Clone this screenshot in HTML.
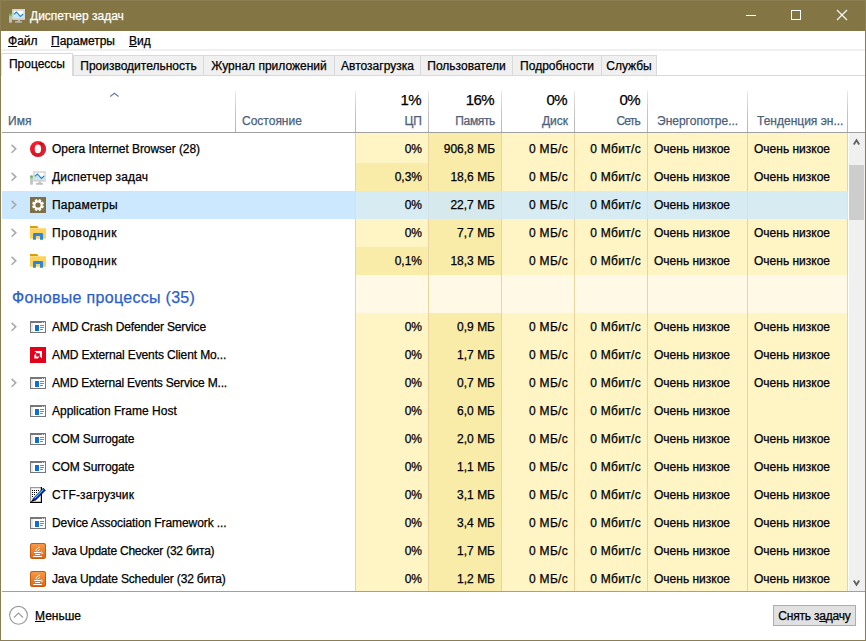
<!DOCTYPE html>
<html><head><meta charset="utf-8"><style>
html,body{margin:0;padding:0;width:866px;height:641px;overflow:hidden;background:#fff}
#w div{position:absolute}
#w{position:relative;width:866px;height:641px;font-family:"Liberation Sans", sans-serif;font-size:12px;color:#000}
.t{white-space:nowrap;-webkit-text-stroke:0.25px currentColor}
u{text-decoration:underline;text-underline-offset:1px}
svg{display:block}
</style></head><body><div id="w">
<div style="left:0px;top:0px;width:866px;height:31px;background:#837544"></div>
<div style="left:9px;top:7px;width:16px;height:16px"><svg width="16" height="16" viewBox="0 0 16 16"><rect x="3.3" y="2.1" width="12.6" height="10.6" fill="#cfcfcf"/><rect x="3.8" y="2.6" width="11.6" height="9.6" fill="none" stroke="#e4e4e4" stroke-width=".6"/><rect x="4.8" y="3.7" width="9.6" height="7.3" fill="#fff"/><path d="M4.8 7.3 L7.4 5 L11.4 9.4 L14.4 6.8 V11 H4.8z" fill="#c4e8f8"/><path d="M4.8 7.3 L7.4 5 L11.4 9.4 L14.2 7" fill="none" stroke="#1d82c6" stroke-width="1.1"/><rect x="8.7" y="12.7" width="2.3" height="1.4" fill="#bdbdbd"/><rect x="6.1" y="14.1" width="6.8" height="1.6" fill="#b8b8b8"/><rect x="0.1" y="6.7" width="2.8" height="9" fill="#c4c4c4"/><rect x="0.4" y="6.7" width="2.2" height="0.8" fill="#555"/><rect x="0.4" y="7.5" width="2.2" height="1.7" fill="#2ee81a"/></svg></div>
<div class="t" style="left:30px;top:1px;height:31px;line-height:30px;text-align:left;color:#fff">Диспетчер задач</div>
<svg style="position:absolute;left:740px;top:0" width="126" height="31"><path d="M6 15.5 H16" stroke="#fff" stroke-width="1"/><rect x="51.5" y="10.5" width="9" height="9" fill="none" stroke="#fff" stroke-width="1"/><path d="M97 10 L107 20 M107 10 L97 20" stroke="#fff" stroke-width="1.1"/></svg>
<div style="left:1px;top:31px;width:864px;height:18px;background:#fff"></div>
<div class="t" style="left:8px;top:32px;height:18px;line-height:19px;text-align:left;"><u>Ф</u>айл</div>
<div class="t" style="left:51px;top:32px;height:18px;line-height:19px;text-align:left;"><u>П</u>араметры</div>
<div class="t" style="left:129px;top:32px;height:18px;line-height:19px;text-align:left;"><u>В</u>ид</div>
<div style="left:1px;top:49px;width:864px;height:2px;background:#f0f0f0"></div>
<div style="left:1px;top:51px;width:864px;height:540px;background:#fff"></div>
<div style="left:1px;top:53px;width:72px;height:23px;background:#fff;border:1px solid #d9d9d9;border-bottom:none;border-left-color:#e6e6ea;box-sizing:border-box"></div>
<div class="t" style="left:1px;top:53px;width:72px;height:22px;line-height:23px;text-align:center;">Процессы</div>
<div style="left:73px;top:55px;width:131px;height:21px;background:#f0f0f0;border:1px solid #d9d9d9;box-sizing:border-box"></div>
<div class="t" style="left:73px;top:56px;width:131px;height:20px;line-height:21px;text-align:center;">Производительность</div>
<div style="left:203px;top:55px;width:132px;height:21px;background:#f0f0f0;border:1px solid #d9d9d9;box-sizing:border-box"></div>
<div class="t" style="left:203px;top:56px;width:132px;height:20px;line-height:21px;text-align:center;">Журнал приложений</div>
<div style="left:334px;top:55px;width:87px;height:21px;background:#f0f0f0;border:1px solid #d9d9d9;box-sizing:border-box"></div>
<div class="t" style="left:334px;top:56px;width:87px;height:20px;line-height:21px;text-align:center;">Автозагрузка</div>
<div style="left:420px;top:55px;width:93px;height:21px;background:#f0f0f0;border:1px solid #d9d9d9;box-sizing:border-box"></div>
<div class="t" style="left:420px;top:56px;width:93px;height:20px;line-height:21px;text-align:center;">Пользователи</div>
<div style="left:512px;top:55px;width:90px;height:21px;background:#f0f0f0;border:1px solid #d9d9d9;box-sizing:border-box"></div>
<div class="t" style="left:512px;top:56px;width:90px;height:20px;line-height:21px;text-align:center;">Подробности</div>
<div style="left:601px;top:55px;width:56px;height:21px;background:#f0f0f0;border:1px solid #d9d9d9;box-sizing:border-box"></div>
<div class="t" style="left:601px;top:56px;width:56px;height:20px;line-height:21px;text-align:center;">Службы</div>
<div style="left:73px;top:75px;width:792px;height:1px;background:#d9d9d9"></div>
<div class="t" style="left:8px;top:112px;height:18px;line-height:18px;text-align:left;color:#4c607a">Имя</div>
<svg style="position:absolute;left:109px;top:91px" width="11" height="7"><path d="M1.2 5.5 L5.4 2.3 L9.6 5.5" fill="none" stroke="#6f7898" stroke-width="1.1"/></svg>
<div class="t" style="left:242px;top:112px;height:18px;line-height:18px;text-align:left;color:#4c607a">Состояние</div>
<div class="t" style="left:348px;top:91px;width:73px;height:18px;line-height:18px;text-align:right;font-size:15px;letter-spacing:-0.6px">1%</div>
<div class="t" style="left:348px;top:112px;width:74px;height:18px;line-height:18px;text-align:right;color:#4c607a;letter-spacing:0px">ЦП</div>
<div class="t" style="left:421px;top:91px;width:73px;height:18px;line-height:18px;text-align:right;font-size:15px;letter-spacing:-0.6px">16%</div>
<div class="t" style="left:421px;top:112px;width:74px;height:18px;line-height:18px;text-align:right;color:#4c607a;letter-spacing:-0.35px">Память</div>
<div class="t" style="left:494px;top:91px;width:73px;height:18px;line-height:18px;text-align:right;font-size:15px;letter-spacing:-0.6px">0%</div>
<div class="t" style="left:494px;top:112px;width:74px;height:18px;line-height:18px;text-align:right;color:#4c607a;letter-spacing:0px">Диск</div>
<div class="t" style="left:567px;top:91px;width:73px;height:18px;line-height:18px;text-align:right;font-size:15px;letter-spacing:-0.6px">0%</div>
<div class="t" style="left:566px;top:112px;width:74px;height:18px;line-height:18px;text-align:right;color:#4c607a;letter-spacing:-0.8px">Сеть</div>
<div class="t" style="left:657px;top:112px;height:18px;line-height:18px;text-align:left;color:#4c607a">Энергопотре...</div>
<div class="t" style="left:757px;top:112px;height:18px;line-height:18px;text-align:left;color:#4c607a">Тенденция эн...</div>
<div style="left:235px;top:91px;width:1px;height:41px;background:linear-gradient(#e8e8e8,#cacaca 45%,#b4b4b4)"></div>
<div style="left:355px;top:91px;width:1px;height:41px;background:linear-gradient(#e8e8e8,#cacaca 45%,#b4b4b4)"></div>
<div style="left:428px;top:91px;width:1px;height:41px;background:linear-gradient(#e8e8e8,#cacaca 45%,#b4b4b4)"></div>
<div style="left:501px;top:91px;width:1px;height:41px;background:linear-gradient(#e8e8e8,#cacaca 45%,#b4b4b4)"></div>
<div style="left:574px;top:91px;width:1px;height:41px;background:linear-gradient(#e8e8e8,#cacaca 45%,#b4b4b4)"></div>
<div style="left:647px;top:91px;width:1px;height:41px;background:linear-gradient(#e8e8e8,#cacaca 45%,#b4b4b4)"></div>
<div style="left:747px;top:91px;width:1px;height:41px;background:linear-gradient(#e8e8e8,#cacaca 45%,#b4b4b4)"></div>
<div style="left:847px;top:91px;width:1px;height:41px;background:linear-gradient(#e8e8e8,#cacaca 45%,#b4b4b4)"></div>
<div style="left:2px;top:132px;width:863px;height:1px;background:#a0a0a0"></div>
<div style="left:356px;top:133px;width:72px;height:458px;background:#fff4c4"></div>
<div style="left:429px;top:133px;width:72px;height:458px;background:#fff4c4"></div>
<div style="left:502px;top:133px;width:72px;height:458px;background:#fff4c4"></div>
<div style="left:575px;top:133px;width:72px;height:458px;background:#fff4c4"></div>
<div style="left:648px;top:133px;width:99px;height:458px;background:#fff4c4"></div>
<div style="left:748px;top:133px;width:99px;height:458px;background:#fff4c4"></div>
<div style="left:429px;top:133px;width:72px;height:2px;background:#f9eca8"></div>
<div style="left:356px;top:135px;width:72px;height:28px;background:#fff4c4"></div>
<div style="left:429px;top:135px;width:72px;height:28px;background:#f9eca8"></div>
<div style="left:502px;top:135px;width:72px;height:28px;background:#fff4c4"></div>
<div style="left:575px;top:135px;width:72px;height:28px;background:#fff4c4"></div>
<div style="left:648px;top:135px;width:99px;height:28px;background:#fff4c4"></div>
<div style="left:748px;top:135px;width:99px;height:28px;background:#fff4c4"></div>
<svg style="position:absolute;left:10px;top:144px" width="7" height="10" viewBox="0 0 7 10"><path d="M1.6 0.9 L5.8 4.85 L1.6 8.8" fill="none" stroke="#a8a8a8" stroke-width="1.5"/></svg>
<div style="left:30px;top:141px;width:16px;height:16px"><svg width="16" height="16" viewBox="0 0 16 16"><defs><linearGradient id="og" x1="0" y1="0" x2="0" y2="1"><stop offset="0" stop-color="#ff1f30"/><stop offset="1" stop-color="#d8101f"/></linearGradient><linearGradient id="og2" x1="0" y1="0" x2="1" y2="1"><stop offset="0" stop-color="#a8000f"/><stop offset="1" stop-color="#e83a44"/></linearGradient></defs><circle cx="8" cy="8" r="8" fill="url(#og)"/><path d="M7.9 3.2 C11.3 3.2 13 5.6 13 8 C13 10.6 11.3 13 7.9 13 C10.6 16.8 16 13.2 16 8 C16 2.8 10.6 -0.8 7.9 3.2z" fill="url(#og2)" opacity=".8"/><ellipse cx="7.9" cy="7.9" rx="3.2" ry="4.4" fill="#fff"/></svg></div>
<div class="t" style="left:52px;top:135px;height:28px;line-height:28px;text-align:left;letter-spacing:-0.05px">Opera Internet Browser (28)</div>
<div class="t" style="left:358px;top:135px;width:64px;height:28px;line-height:28px;text-align:right;">0%</div>
<div class="t" style="left:431px;top:135px;width:64px;height:28px;line-height:28px;text-align:right;">906,8 МБ</div>
<div class="t" style="left:504px;top:135px;width:64px;height:28px;line-height:28px;text-align:right;letter-spacing:0.3px;">0 МБ/с</div>
<div class="t" style="left:577px;top:135px;width:64px;height:28px;line-height:28px;text-align:right;letter-spacing:0.3px;">0 Мбит/с</div>
<div class="t" style="left:654px;top:135px;height:28px;line-height:28px;text-align:left;">Очень низкое</div>
<div class="t" style="left:754px;top:135px;height:28px;line-height:28px;text-align:left;">Очень низкое</div>
<div style="left:356px;top:163px;width:72px;height:28px;background:#f9eca8"></div>
<div style="left:429px;top:163px;width:72px;height:28px;background:#f9eca8"></div>
<div style="left:502px;top:163px;width:72px;height:28px;background:#fff4c4"></div>
<div style="left:575px;top:163px;width:72px;height:28px;background:#fff4c4"></div>
<div style="left:648px;top:163px;width:99px;height:28px;background:#fff4c4"></div>
<div style="left:748px;top:163px;width:99px;height:28px;background:#fff4c4"></div>
<svg style="position:absolute;left:10px;top:172px" width="7" height="10" viewBox="0 0 7 10"><path d="M1.6 0.9 L5.8 4.85 L1.6 8.8" fill="none" stroke="#a8a8a8" stroke-width="1.5"/></svg>
<div style="left:30px;top:169px;width:16px;height:16px"><svg width="16" height="16" viewBox="0 0 16 16"><rect x="3.3" y="2.1" width="12.6" height="10.6" fill="#cfcfcf"/><rect x="3.8" y="2.6" width="11.6" height="9.6" fill="none" stroke="#e4e4e4" stroke-width=".6"/><rect x="4.8" y="3.7" width="9.6" height="7.3" fill="#fff"/><path d="M4.8 7.3 L7.4 5 L11.4 9.4 L14.4 6.8 V11 H4.8z" fill="#c4e8f8"/><path d="M4.8 7.3 L7.4 5 L11.4 9.4 L14.2 7" fill="none" stroke="#1d82c6" stroke-width="1.1"/><rect x="8.7" y="12.7" width="2.3" height="1.4" fill="#bdbdbd"/><rect x="6.1" y="14.1" width="6.8" height="1.6" fill="#b8b8b8"/><rect x="0.1" y="6.7" width="2.8" height="9" fill="#c4c4c4"/><rect x="0.4" y="6.7" width="2.2" height="0.8" fill="#555"/><rect x="0.4" y="7.5" width="2.2" height="1.7" fill="#2ee81a"/></svg></div>
<div class="t" style="left:52px;top:163px;height:28px;line-height:28px;text-align:left;letter-spacing:0.15px">Диспетчер задач</div>
<div class="t" style="left:358px;top:163px;width:64px;height:28px;line-height:28px;text-align:right;">0,3%</div>
<div class="t" style="left:431px;top:163px;width:64px;height:28px;line-height:28px;text-align:right;">18,6 МБ</div>
<div class="t" style="left:504px;top:163px;width:64px;height:28px;line-height:28px;text-align:right;letter-spacing:0.3px;">0 МБ/с</div>
<div class="t" style="left:577px;top:163px;width:64px;height:28px;line-height:28px;text-align:right;letter-spacing:0.3px;">0 Мбит/с</div>
<div class="t" style="left:654px;top:163px;height:28px;line-height:28px;text-align:left;">Очень низкое</div>
<div class="t" style="left:754px;top:163px;height:28px;line-height:28px;text-align:left;">Очень низкое</div>
<div style="left:2px;top:191px;width:353px;height:28px;background:#cce8ff"></div>
<div style="left:356px;top:191px;width:72px;height:28px;background:#fff4c4"></div>
<div style="left:429px;top:191px;width:72px;height:28px;background:#f9eca8"></div>
<div style="left:502px;top:191px;width:72px;height:28px;background:#fff4c4"></div>
<div style="left:575px;top:191px;width:72px;height:28px;background:#fff4c4"></div>
<div style="left:648px;top:191px;width:99px;height:28px;background:#fff4c4"></div>
<div style="left:748px;top:191px;width:99px;height:28px;background:#fff4c4"></div>
<div style="left:356px;top:219px;width:72px;height:28px;background:#fff4c4"></div>
<div style="left:429px;top:219px;width:72px;height:28px;background:#f9eca8"></div>
<div style="left:502px;top:219px;width:72px;height:28px;background:#fff4c4"></div>
<div style="left:575px;top:219px;width:72px;height:28px;background:#fff4c4"></div>
<div style="left:648px;top:219px;width:99px;height:28px;background:#fff4c4"></div>
<div style="left:748px;top:219px;width:99px;height:28px;background:#fff4c4"></div>
<svg style="position:absolute;left:10px;top:228px" width="7" height="10" viewBox="0 0 7 10"><path d="M1.6 0.9 L5.8 4.85 L1.6 8.8" fill="none" stroke="#a8a8a8" stroke-width="1.5"/></svg>
<div style="left:30px;top:225px;width:16px;height:16px"><svg width="16" height="16" viewBox="0 0 16 16"><path d="M0 1 H7 L8.3 2.4 L7 3.9 H0z" fill="#dc9c0c"/><rect x="0" y="3" width="16" height="10.7" fill="#fdd35c"/><rect x="0" y="3" width="16" height="0.8" fill="#ffe28e"/><path d="M3 14.8 V9.2 Q3 8 4.2 8 H11.9 Q13.1 8 13.1 9.2 V14.8 H10 V11 H5.9 V14.8z" fill="#2a86de"/></svg></div>
<div class="t" style="left:52px;top:219px;height:28px;line-height:28px;text-align:left;letter-spacing:0.55px">Проводник</div>
<div class="t" style="left:358px;top:219px;width:64px;height:28px;line-height:28px;text-align:right;">0%</div>
<div class="t" style="left:431px;top:219px;width:64px;height:28px;line-height:28px;text-align:right;">7,7 МБ</div>
<div class="t" style="left:504px;top:219px;width:64px;height:28px;line-height:28px;text-align:right;letter-spacing:0.3px;">0 МБ/с</div>
<div class="t" style="left:577px;top:219px;width:64px;height:28px;line-height:28px;text-align:right;letter-spacing:0.3px;">0 Мбит/с</div>
<div class="t" style="left:654px;top:219px;height:28px;line-height:28px;text-align:left;">Очень низкое</div>
<div class="t" style="left:754px;top:219px;height:28px;line-height:28px;text-align:left;">Очень низкое</div>
<div style="left:356px;top:247px;width:72px;height:28px;background:#f9eca8"></div>
<div style="left:429px;top:247px;width:72px;height:28px;background:#f9eca8"></div>
<div style="left:502px;top:247px;width:72px;height:28px;background:#fff4c4"></div>
<div style="left:575px;top:247px;width:72px;height:28px;background:#fff4c4"></div>
<div style="left:648px;top:247px;width:99px;height:28px;background:#fff4c4"></div>
<div style="left:748px;top:247px;width:99px;height:28px;background:#fff4c4"></div>
<svg style="position:absolute;left:10px;top:256px" width="7" height="10" viewBox="0 0 7 10"><path d="M1.6 0.9 L5.8 4.85 L1.6 8.8" fill="none" stroke="#a8a8a8" stroke-width="1.5"/></svg>
<div style="left:30px;top:253px;width:16px;height:16px"><svg width="16" height="16" viewBox="0 0 16 16"><path d="M0 1 H7 L8.3 2.4 L7 3.9 H0z" fill="#dc9c0c"/><rect x="0" y="3" width="16" height="10.7" fill="#fdd35c"/><rect x="0" y="3" width="16" height="0.8" fill="#ffe28e"/><path d="M3 14.8 V9.2 Q3 8 4.2 8 H11.9 Q13.1 8 13.1 9.2 V14.8 H10 V11 H5.9 V14.8z" fill="#2a86de"/></svg></div>
<div class="t" style="left:52px;top:247px;height:28px;line-height:28px;text-align:left;letter-spacing:0.55px">Проводник</div>
<div class="t" style="left:358px;top:247px;width:64px;height:28px;line-height:28px;text-align:right;">0,1%</div>
<div class="t" style="left:431px;top:247px;width:64px;height:28px;line-height:28px;text-align:right;">18,3 МБ</div>
<div class="t" style="left:504px;top:247px;width:64px;height:28px;line-height:28px;text-align:right;letter-spacing:0.3px;">0 МБ/с</div>
<div class="t" style="left:577px;top:247px;width:64px;height:28px;line-height:28px;text-align:right;letter-spacing:0.3px;">0 Мбит/с</div>
<div class="t" style="left:654px;top:247px;height:28px;line-height:28px;text-align:left;">Очень низкое</div>
<div class="t" style="left:754px;top:247px;height:28px;line-height:28px;text-align:left;">Очень низкое</div>
<div style="left:356px;top:275px;width:72px;height:38px;background:#fff9e5"></div>
<div style="left:429px;top:275px;width:72px;height:38px;background:#fff9e5"></div>
<div style="left:502px;top:275px;width:72px;height:38px;background:#fff9e5"></div>
<div style="left:575px;top:275px;width:72px;height:38px;background:#fff9e5"></div>
<div style="left:648px;top:275px;width:99px;height:38px;background:#fff9e5"></div>
<div style="left:748px;top:275px;width:99px;height:38px;background:#fff9e5"></div>
<div class="t" style="left:12px;top:275px;height:38px;line-height:45px;text-align:left;font-size:16px;letter-spacing:0.3px;color:#2a60cc">Фоновые процессы (35)</div>
<div style="left:356px;top:313px;width:72px;height:28px;background:#fff4c4"></div>
<div style="left:429px;top:313px;width:72px;height:28px;background:#f9eca8"></div>
<div style="left:502px;top:313px;width:72px;height:28px;background:#fff4c4"></div>
<div style="left:575px;top:313px;width:72px;height:28px;background:#fff4c4"></div>
<div style="left:648px;top:313px;width:99px;height:28px;background:#fff4c4"></div>
<div style="left:748px;top:313px;width:99px;height:28px;background:#fff4c4"></div>
<svg style="position:absolute;left:10px;top:322px" width="7" height="10" viewBox="0 0 7 10"><path d="M1.6 0.9 L5.8 4.85 L1.6 8.8" fill="none" stroke="#a8a8a8" stroke-width="1.5"/></svg>
<div style="left:30px;top:319px;width:16px;height:16px"><svg width="16" height="16" viewBox="0 0 16 16" shape-rendering="crispEdges"><rect x="0" y="2" width="16" height="12" fill="#777"/><rect x="1" y="4" width="14" height="9" fill="#fff"/><rect x="1" y="4" width="2" height="9" fill="#e8e8e8"/><rect x="12" y="3" width="1" height="1" fill="#ddd"/><rect x="14" y="3" width="1" height="1" fill="#ddd"/><rect x="5" y="6" width="4" height="6" fill="#0b6fd6"/><rect x="10" y="6" width="4" height="1" fill="#888"/><rect x="10" y="8" width="4" height="1" fill="#888"/><rect x="10" y="10" width="3" height="1" fill="#888"/></svg></div>
<div class="t" style="left:52px;top:313px;height:28px;line-height:28px;text-align:left;letter-spacing:-0.16px">AMD Crash Defender Service</div>
<div class="t" style="left:358px;top:313px;width:64px;height:28px;line-height:28px;text-align:right;">0%</div>
<div class="t" style="left:431px;top:313px;width:64px;height:28px;line-height:28px;text-align:right;">0,9 МБ</div>
<div class="t" style="left:504px;top:313px;width:64px;height:28px;line-height:28px;text-align:right;letter-spacing:0.3px;">0 МБ/с</div>
<div class="t" style="left:577px;top:313px;width:64px;height:28px;line-height:28px;text-align:right;letter-spacing:0.3px;">0 Мбит/с</div>
<div class="t" style="left:654px;top:313px;height:28px;line-height:28px;text-align:left;">Очень низкое</div>
<div class="t" style="left:754px;top:313px;height:28px;line-height:28px;text-align:left;">Очень низкое</div>
<div style="left:356px;top:341px;width:72px;height:28px;background:#fff4c4"></div>
<div style="left:429px;top:341px;width:72px;height:28px;background:#f9eca8"></div>
<div style="left:502px;top:341px;width:72px;height:28px;background:#fff4c4"></div>
<div style="left:575px;top:341px;width:72px;height:28px;background:#fff4c4"></div>
<div style="left:648px;top:341px;width:99px;height:28px;background:#fff4c4"></div>
<div style="left:748px;top:341px;width:99px;height:28px;background:#fff4c4"></div>
<div style="left:30px;top:347px;width:16px;height:16px"><svg width="16" height="16" viewBox="0 0 16 16"><rect width="16" height="16" fill="#e2001a"/><path d="M4.5 4 H12 V11.5 L9.8 9.3 V6.2 H6.7z" fill="#fff"/><path d="M4.3 8 L6.2 6.3 V9.6 H9.5 L7.8 11.6 H4.3z" fill="#fff"/></svg></div>
<div class="t" style="left:52px;top:341px;height:28px;line-height:28px;text-align:left;letter-spacing:-0.12px">AMD External Events Client Mo...</div>
<div class="t" style="left:358px;top:341px;width:64px;height:28px;line-height:28px;text-align:right;">0%</div>
<div class="t" style="left:431px;top:341px;width:64px;height:28px;line-height:28px;text-align:right;">1,7 МБ</div>
<div class="t" style="left:504px;top:341px;width:64px;height:28px;line-height:28px;text-align:right;letter-spacing:0.3px;">0 МБ/с</div>
<div class="t" style="left:577px;top:341px;width:64px;height:28px;line-height:28px;text-align:right;letter-spacing:0.3px;">0 Мбит/с</div>
<div class="t" style="left:654px;top:341px;height:28px;line-height:28px;text-align:left;">Очень низкое</div>
<div class="t" style="left:754px;top:341px;height:28px;line-height:28px;text-align:left;">Очень низкое</div>
<div style="left:356px;top:369px;width:72px;height:28px;background:#fff4c4"></div>
<div style="left:429px;top:369px;width:72px;height:28px;background:#f9eca8"></div>
<div style="left:502px;top:369px;width:72px;height:28px;background:#fff4c4"></div>
<div style="left:575px;top:369px;width:72px;height:28px;background:#fff4c4"></div>
<div style="left:648px;top:369px;width:99px;height:28px;background:#fff4c4"></div>
<div style="left:748px;top:369px;width:99px;height:28px;background:#fff4c4"></div>
<svg style="position:absolute;left:10px;top:378px" width="7" height="10" viewBox="0 0 7 10"><path d="M1.6 0.9 L5.8 4.85 L1.6 8.8" fill="none" stroke="#a8a8a8" stroke-width="1.5"/></svg>
<div style="left:30px;top:375px;width:16px;height:16px"><svg width="16" height="16" viewBox="0 0 16 16" shape-rendering="crispEdges"><rect x="0" y="2" width="16" height="12" fill="#777"/><rect x="1" y="4" width="14" height="9" fill="#fff"/><rect x="1" y="4" width="2" height="9" fill="#e8e8e8"/><rect x="12" y="3" width="1" height="1" fill="#ddd"/><rect x="14" y="3" width="1" height="1" fill="#ddd"/><rect x="5" y="6" width="4" height="6" fill="#0b6fd6"/><rect x="10" y="6" width="4" height="1" fill="#888"/><rect x="10" y="8" width="4" height="1" fill="#888"/><rect x="10" y="10" width="3" height="1" fill="#888"/></svg></div>
<div class="t" style="left:52px;top:369px;height:28px;line-height:28px;text-align:left;letter-spacing:-0.18px">AMD External Events Service M...</div>
<div class="t" style="left:358px;top:369px;width:64px;height:28px;line-height:28px;text-align:right;">0%</div>
<div class="t" style="left:431px;top:369px;width:64px;height:28px;line-height:28px;text-align:right;">0,7 МБ</div>
<div class="t" style="left:504px;top:369px;width:64px;height:28px;line-height:28px;text-align:right;letter-spacing:0.3px;">0 МБ/с</div>
<div class="t" style="left:577px;top:369px;width:64px;height:28px;line-height:28px;text-align:right;letter-spacing:0.3px;">0 Мбит/с</div>
<div class="t" style="left:654px;top:369px;height:28px;line-height:28px;text-align:left;">Очень низкое</div>
<div class="t" style="left:754px;top:369px;height:28px;line-height:28px;text-align:left;">Очень низкое</div>
<div style="left:356px;top:397px;width:72px;height:28px;background:#fff4c4"></div>
<div style="left:429px;top:397px;width:72px;height:28px;background:#f9eca8"></div>
<div style="left:502px;top:397px;width:72px;height:28px;background:#fff4c4"></div>
<div style="left:575px;top:397px;width:72px;height:28px;background:#fff4c4"></div>
<div style="left:648px;top:397px;width:99px;height:28px;background:#fff4c4"></div>
<div style="left:748px;top:397px;width:99px;height:28px;background:#fff4c4"></div>
<div style="left:30px;top:403px;width:16px;height:16px"><svg width="16" height="16" viewBox="0 0 16 16" shape-rendering="crispEdges"><rect x="0" y="2" width="16" height="12" fill="#777"/><rect x="1" y="4" width="14" height="9" fill="#fff"/><rect x="1" y="4" width="2" height="9" fill="#e8e8e8"/><rect x="12" y="3" width="1" height="1" fill="#ddd"/><rect x="14" y="3" width="1" height="1" fill="#ddd"/><rect x="5" y="6" width="4" height="6" fill="#0b6fd6"/><rect x="10" y="6" width="4" height="1" fill="#888"/><rect x="10" y="8" width="4" height="1" fill="#888"/><rect x="10" y="10" width="3" height="1" fill="#888"/></svg></div>
<div class="t" style="left:52px;top:397px;height:28px;line-height:28px;text-align:left;letter-spacing:0px">Application Frame Host</div>
<div class="t" style="left:358px;top:397px;width:64px;height:28px;line-height:28px;text-align:right;">0%</div>
<div class="t" style="left:431px;top:397px;width:64px;height:28px;line-height:28px;text-align:right;">6,0 МБ</div>
<div class="t" style="left:504px;top:397px;width:64px;height:28px;line-height:28px;text-align:right;letter-spacing:0.3px;">0 МБ/с</div>
<div class="t" style="left:577px;top:397px;width:64px;height:28px;line-height:28px;text-align:right;letter-spacing:0.3px;">0 Мбит/с</div>
<div class="t" style="left:654px;top:397px;height:28px;line-height:28px;text-align:left;">Очень низкое</div>
<div style="left:356px;top:425px;width:72px;height:28px;background:#fff4c4"></div>
<div style="left:429px;top:425px;width:72px;height:28px;background:#f9eca8"></div>
<div style="left:502px;top:425px;width:72px;height:28px;background:#fff4c4"></div>
<div style="left:575px;top:425px;width:72px;height:28px;background:#fff4c4"></div>
<div style="left:648px;top:425px;width:99px;height:28px;background:#fff4c4"></div>
<div style="left:748px;top:425px;width:99px;height:28px;background:#fff4c4"></div>
<div style="left:30px;top:431px;width:16px;height:16px"><svg width="16" height="16" viewBox="0 0 16 16" shape-rendering="crispEdges"><rect x="0" y="2" width="16" height="12" fill="#777"/><rect x="1" y="4" width="14" height="9" fill="#fff"/><rect x="1" y="4" width="2" height="9" fill="#e8e8e8"/><rect x="12" y="3" width="1" height="1" fill="#ddd"/><rect x="14" y="3" width="1" height="1" fill="#ddd"/><rect x="5" y="6" width="4" height="6" fill="#0b6fd6"/><rect x="10" y="6" width="4" height="1" fill="#888"/><rect x="10" y="8" width="4" height="1" fill="#888"/><rect x="10" y="10" width="3" height="1" fill="#888"/></svg></div>
<div class="t" style="left:52px;top:425px;height:28px;line-height:28px;text-align:left;letter-spacing:-0.14px">COM Surrogate</div>
<div class="t" style="left:358px;top:425px;width:64px;height:28px;line-height:28px;text-align:right;">0%</div>
<div class="t" style="left:431px;top:425px;width:64px;height:28px;line-height:28px;text-align:right;">2,0 МБ</div>
<div class="t" style="left:504px;top:425px;width:64px;height:28px;line-height:28px;text-align:right;letter-spacing:0.3px;">0 МБ/с</div>
<div class="t" style="left:577px;top:425px;width:64px;height:28px;line-height:28px;text-align:right;letter-spacing:0.3px;">0 Мбит/с</div>
<div class="t" style="left:654px;top:425px;height:28px;line-height:28px;text-align:left;">Очень низкое</div>
<div class="t" style="left:754px;top:425px;height:28px;line-height:28px;text-align:left;">Очень низкое</div>
<div style="left:356px;top:453px;width:72px;height:28px;background:#fff4c4"></div>
<div style="left:429px;top:453px;width:72px;height:28px;background:#f9eca8"></div>
<div style="left:502px;top:453px;width:72px;height:28px;background:#fff4c4"></div>
<div style="left:575px;top:453px;width:72px;height:28px;background:#fff4c4"></div>
<div style="left:648px;top:453px;width:99px;height:28px;background:#fff4c4"></div>
<div style="left:748px;top:453px;width:99px;height:28px;background:#fff4c4"></div>
<div style="left:30px;top:459px;width:16px;height:16px"><svg width="16" height="16" viewBox="0 0 16 16" shape-rendering="crispEdges"><rect x="0" y="2" width="16" height="12" fill="#777"/><rect x="1" y="4" width="14" height="9" fill="#fff"/><rect x="1" y="4" width="2" height="9" fill="#e8e8e8"/><rect x="12" y="3" width="1" height="1" fill="#ddd"/><rect x="14" y="3" width="1" height="1" fill="#ddd"/><rect x="5" y="6" width="4" height="6" fill="#0b6fd6"/><rect x="10" y="6" width="4" height="1" fill="#888"/><rect x="10" y="8" width="4" height="1" fill="#888"/><rect x="10" y="10" width="3" height="1" fill="#888"/></svg></div>
<div class="t" style="left:52px;top:453px;height:28px;line-height:28px;text-align:left;letter-spacing:-0.14px">COM Surrogate</div>
<div class="t" style="left:358px;top:453px;width:64px;height:28px;line-height:28px;text-align:right;">0%</div>
<div class="t" style="left:431px;top:453px;width:64px;height:28px;line-height:28px;text-align:right;">1,1 МБ</div>
<div class="t" style="left:504px;top:453px;width:64px;height:28px;line-height:28px;text-align:right;letter-spacing:0.3px;">0 МБ/с</div>
<div class="t" style="left:577px;top:453px;width:64px;height:28px;line-height:28px;text-align:right;letter-spacing:0.3px;">0 Мбит/с</div>
<div class="t" style="left:654px;top:453px;height:28px;line-height:28px;text-align:left;">Очень низкое</div>
<div class="t" style="left:754px;top:453px;height:28px;line-height:28px;text-align:left;">Очень низкое</div>
<div style="left:356px;top:481px;width:72px;height:28px;background:#fff4c4"></div>
<div style="left:429px;top:481px;width:72px;height:28px;background:#f9eca8"></div>
<div style="left:502px;top:481px;width:72px;height:28px;background:#fff4c4"></div>
<div style="left:575px;top:481px;width:72px;height:28px;background:#fff4c4"></div>
<div style="left:648px;top:481px;width:99px;height:28px;background:#fff4c4"></div>
<div style="left:748px;top:481px;width:99px;height:28px;background:#fff4c4"></div>
<div style="left:30px;top:487px;width:16px;height:16px"><svg width="16" height="16" viewBox="0 0 16 16"><rect x="0" y="0" width="12" height="16" fill="#fff"/><path d="M0.6 15.5 V0.6 H11" fill="none" stroke="#9a9a9a" stroke-width="1.2"/><path d="M11.4 0 V15.4 H0" fill="none" stroke="#000" stroke-width="1.2"/><g fill="#000"><rect x="2" y="3" width="1" height="1"/><rect x="4" y="3" width="1" height="1"/><rect x="6" y="3" width="1" height="1"/><rect x="8" y="3" width="1" height="1"/><rect x="2" y="5" width="1" height="1"/><rect x="4" y="5" width="1" height="1"/><rect x="6" y="5" width="1" height="1"/><rect x="2" y="7" width="1" height="1"/><rect x="4" y="7" width="1" height="1"/><rect x="2" y="9" width="1" height="1"/></g><path d="M3.2 11.6 L13.2 1.2 L15.4 3.2 L5.2 13.6z" fill="#0000d8" stroke="#000030" stroke-width=".7"/><path d="M4.6 11.4 L13.4 2.3" stroke="#30e0ff" stroke-width="1.1"/><path d="M0.8 15.2 L3 11.8 L5 13.6z" fill="#000"/></svg></div>
<div class="t" style="left:52px;top:481px;height:28px;line-height:28px;text-align:left;letter-spacing:0.19px">CTF-загрузчик</div>
<div class="t" style="left:358px;top:481px;width:64px;height:28px;line-height:28px;text-align:right;">0%</div>
<div class="t" style="left:431px;top:481px;width:64px;height:28px;line-height:28px;text-align:right;">3,1 МБ</div>
<div class="t" style="left:504px;top:481px;width:64px;height:28px;line-height:28px;text-align:right;letter-spacing:0.3px;">0 МБ/с</div>
<div class="t" style="left:577px;top:481px;width:64px;height:28px;line-height:28px;text-align:right;letter-spacing:0.3px;">0 Мбит/с</div>
<div class="t" style="left:654px;top:481px;height:28px;line-height:28px;text-align:left;">Очень низкое</div>
<div class="t" style="left:754px;top:481px;height:28px;line-height:28px;text-align:left;">Очень низкое</div>
<div style="left:356px;top:509px;width:72px;height:28px;background:#fff4c4"></div>
<div style="left:429px;top:509px;width:72px;height:28px;background:#f9eca8"></div>
<div style="left:502px;top:509px;width:72px;height:28px;background:#fff4c4"></div>
<div style="left:575px;top:509px;width:72px;height:28px;background:#fff4c4"></div>
<div style="left:648px;top:509px;width:99px;height:28px;background:#fff4c4"></div>
<div style="left:748px;top:509px;width:99px;height:28px;background:#fff4c4"></div>
<div style="left:30px;top:515px;width:16px;height:16px"><svg width="16" height="16" viewBox="0 0 16 16" shape-rendering="crispEdges"><rect x="0" y="2" width="16" height="12" fill="#777"/><rect x="1" y="4" width="14" height="9" fill="#fff"/><rect x="1" y="4" width="2" height="9" fill="#e8e8e8"/><rect x="12" y="3" width="1" height="1" fill="#ddd"/><rect x="14" y="3" width="1" height="1" fill="#ddd"/><rect x="5" y="6" width="4" height="6" fill="#0b6fd6"/><rect x="10" y="6" width="4" height="1" fill="#888"/><rect x="10" y="8" width="4" height="1" fill="#888"/><rect x="10" y="10" width="3" height="1" fill="#888"/></svg></div>
<div class="t" style="left:52px;top:509px;height:28px;line-height:28px;text-align:left;letter-spacing:-0.09px">Device Association Framework ...</div>
<div class="t" style="left:358px;top:509px;width:64px;height:28px;line-height:28px;text-align:right;">0%</div>
<div class="t" style="left:431px;top:509px;width:64px;height:28px;line-height:28px;text-align:right;">3,4 МБ</div>
<div class="t" style="left:504px;top:509px;width:64px;height:28px;line-height:28px;text-align:right;letter-spacing:0.3px;">0 МБ/с</div>
<div class="t" style="left:577px;top:509px;width:64px;height:28px;line-height:28px;text-align:right;letter-spacing:0.3px;">0 Мбит/с</div>
<div class="t" style="left:654px;top:509px;height:28px;line-height:28px;text-align:left;">Очень низкое</div>
<div class="t" style="left:754px;top:509px;height:28px;line-height:28px;text-align:left;">Очень низкое</div>
<div style="left:356px;top:537px;width:72px;height:28px;background:#fff4c4"></div>
<div style="left:429px;top:537px;width:72px;height:28px;background:#f9eca8"></div>
<div style="left:502px;top:537px;width:72px;height:28px;background:#fff4c4"></div>
<div style="left:575px;top:537px;width:72px;height:28px;background:#fff4c4"></div>
<div style="left:648px;top:537px;width:99px;height:28px;background:#fff4c4"></div>
<div style="left:748px;top:537px;width:99px;height:28px;background:#fff4c4"></div>
<div style="left:30px;top:543px;width:16px;height:16px"><svg width="16" height="16" viewBox="0 0 16 16"><defs><linearGradient id="jg" x1="0" y1="0" x2="0" y2="1"><stop offset="0" stop-color="#f59a4c"/><stop offset="1" stop-color="#e2680e"/></linearGradient></defs><rect x="0" y="0" width="16" height="16" rx="2.2" fill="#c8590c"/><rect x="1" y="1" width="14" height="14" rx="1.5" fill="url(#jg)"/><g fill="#fff" shape-rendering="crispEdges"><rect x="4" y="9" width="7" height="1"/><rect x="5" y="11" width="5" height="1"/><rect x="3" y="13" width="9" height="1"/></g><g fill="none" stroke="#fff" stroke-width="1"><path d="M6.2 8.2 L5.8 7 L8.6 4.6 L9.8 4.2"/><path d="M7.6 8.2 L9.8 6.4"/><path d="M11.2 8.7 Q13.6 9.6 11.4 11.3"/></g></svg></div>
<div class="t" style="left:52px;top:537px;height:28px;line-height:28px;text-align:left;letter-spacing:-0.23px">Java Update Checker (32 бита)</div>
<div class="t" style="left:358px;top:537px;width:64px;height:28px;line-height:28px;text-align:right;">0%</div>
<div class="t" style="left:431px;top:537px;width:64px;height:28px;line-height:28px;text-align:right;">1,7 МБ</div>
<div class="t" style="left:504px;top:537px;width:64px;height:28px;line-height:28px;text-align:right;letter-spacing:0.3px;">0 МБ/с</div>
<div class="t" style="left:577px;top:537px;width:64px;height:28px;line-height:28px;text-align:right;letter-spacing:0.3px;">0 Мбит/с</div>
<div class="t" style="left:654px;top:537px;height:28px;line-height:28px;text-align:left;">Очень низкое</div>
<div class="t" style="left:754px;top:537px;height:28px;line-height:28px;text-align:left;">Очень низкое</div>
<div style="left:356px;top:565px;width:72px;height:28px;background:#fff4c4"></div>
<div style="left:429px;top:565px;width:72px;height:28px;background:#f9eca8"></div>
<div style="left:502px;top:565px;width:72px;height:28px;background:#fff4c4"></div>
<div style="left:575px;top:565px;width:72px;height:28px;background:#fff4c4"></div>
<div style="left:648px;top:565px;width:99px;height:28px;background:#fff4c4"></div>
<div style="left:748px;top:565px;width:99px;height:28px;background:#fff4c4"></div>
<div style="left:30px;top:571px;width:16px;height:16px"><svg width="16" height="16" viewBox="0 0 16 16"><defs><linearGradient id="jg" x1="0" y1="0" x2="0" y2="1"><stop offset="0" stop-color="#f59a4c"/><stop offset="1" stop-color="#e2680e"/></linearGradient></defs><rect x="0" y="0" width="16" height="16" rx="2.2" fill="#c8590c"/><rect x="1" y="1" width="14" height="14" rx="1.5" fill="url(#jg)"/><g fill="#fff" shape-rendering="crispEdges"><rect x="4" y="9" width="7" height="1"/><rect x="5" y="11" width="5" height="1"/><rect x="3" y="13" width="9" height="1"/></g><g fill="none" stroke="#fff" stroke-width="1"><path d="M6.2 8.2 L5.8 7 L8.6 4.6 L9.8 4.2"/><path d="M7.6 8.2 L9.8 6.4"/><path d="M11.2 8.7 Q13.6 9.6 11.4 11.3"/></g></svg></div>
<div class="t" style="left:52px;top:565px;height:28px;line-height:28px;text-align:left;letter-spacing:-0.15px">Java Update Scheduler (32 бита)</div>
<div class="t" style="left:358px;top:565px;width:64px;height:28px;line-height:28px;text-align:right;">0%</div>
<div class="t" style="left:431px;top:565px;width:64px;height:28px;line-height:28px;text-align:right;">1,2 МБ</div>
<div class="t" style="left:504px;top:565px;width:64px;height:28px;line-height:28px;text-align:right;letter-spacing:0.3px;">0 МБ/с</div>
<div class="t" style="left:577px;top:565px;width:64px;height:28px;line-height:28px;text-align:right;letter-spacing:0.3px;">0 Мбит/с</div>
<div class="t" style="left:654px;top:565px;height:28px;line-height:28px;text-align:left;">Очень низкое</div>
<div class="t" style="left:754px;top:565px;height:28px;line-height:28px;text-align:left;">Очень низкое</div>
<div style="left:355px;top:133px;width:1px;height:458px;background:#e9d49e"></div>
<div style="left:428px;top:133px;width:1px;height:458px;background:#e9d49e"></div>
<div style="left:501px;top:133px;width:1px;height:458px;background:#e9d49e"></div>
<div style="left:574px;top:133px;width:1px;height:458px;background:#e9d49e"></div>
<div style="left:647px;top:133px;width:1px;height:458px;background:#e9d49e"></div>
<div style="left:747px;top:133px;width:1px;height:458px;background:#e9d49e"></div>
<div style="left:847px;top:133px;width:1px;height:458px;background:#e9d49e"></div>
<div style="left:355px;top:191px;width:493px;height:28px;background:rgba(204,232,255,0.78)"></div>
<svg style="position:absolute;left:10px;top:200px" width="7" height="10" viewBox="0 0 7 10"><path d="M1.6 0.9 L5.8 4.85 L1.6 8.8" fill="none" stroke="#a8a8a8" stroke-width="1.5"/></svg>
<div style="left:30px;top:197px;width:16px;height:16px"><svg width="16" height="16" viewBox="0 0 16 16"><rect width="16" height="16" fill="#7f7044"/><g fill="#fff" transform="rotate(22.5 8 8)"><circle cx="8" cy="8" r="4.5"/><rect x="6.7" y="2.1" width="2.6" height="11.8"/><rect x="2.1" y="6.7" width="11.8" height="2.6"/><rect x="6.7" y="2.1" width="2.6" height="11.8" transform="rotate(45 8 8)"/><rect x="6.7" y="2.1" width="2.6" height="11.8" transform="rotate(-45 8 8)"/></g><circle cx="8" cy="8" r="2.6" fill="#7f7044"/></svg></div>
<div class="t" style="left:52px;top:191px;height:28px;line-height:28px;text-align:left;letter-spacing:0.2px">Параметры</div>
<div class="t" style="left:358px;top:191px;width:64px;height:28px;line-height:28px;text-align:right;">0%</div>
<div class="t" style="left:431px;top:191px;width:64px;height:28px;line-height:28px;text-align:right;">22,7 МБ</div>
<div class="t" style="left:504px;top:191px;width:64px;height:28px;line-height:28px;text-align:right;letter-spacing:0.3px;">0 МБ/с</div>
<div class="t" style="left:577px;top:191px;width:64px;height:28px;line-height:28px;text-align:right;letter-spacing:0.3px;">0 Мбит/с</div>
<div class="t" style="left:654px;top:191px;height:28px;line-height:28px;text-align:left;">Очень низкое</div>
<div style="left:849px;top:133px;width:16px;height:458px;background:#f0f0f0"></div>
<div style="left:848px;top:133px;width:1px;height:458px;background:#fff"></div>
<div style="left:849px;top:165px;width:15px;height:55px;background:#cdcdcd"></div>
<svg style="position:absolute;left:848px;top:133px" width="17" height="458"><path d="M5.8 11.4 L8.5 7.2 L11.2 11.4" fill="none" stroke="#606060" stroke-width="1.8" stroke-linejoin="miter"/><path d="M5.8 447.6 L8.5 451.8 L11.2 447.6" fill="none" stroke="#606060" stroke-width="1.8"/></svg>
<div style="left:2px;top:591px;width:863px;height:1px;background:#a0a0a0"></div>
<div style="left:1px;top:592px;width:864px;height:48px;background:#fff"></div>
<svg style="position:absolute;left:8px;top:605px" width="21" height="21"><circle cx="10.5" cy="10.3" r="8.9" fill="none" stroke="#9a9a9a" stroke-width="1.1"/><path d="M6 12.5 L10.5 8 L15 12.5" fill="none" stroke="#9a9a9a" stroke-width="1.1"/></svg>
<div class="t" style="left:35px;top:606px;height:21px;line-height:21px;text-align:left;"><u>М</u>еньше</div>
<div style="left:773px;top:605px;width:83px;height:21px;background:#e1e1e1;border:1px solid #adadad;box-sizing:border-box"></div>
<div class="t" style="left:773px;top:605px;width:83px;height:21px;line-height:22px;text-align:center;letter-spacing:-0.2px">Снять з<u>а</u>дачу</div>
<div style="left:0px;top:0px;width:1px;height:641px;background:#8b7e53"></div>
<div style="left:865px;top:0px;width:1px;height:641px;background:#8b7e53"></div>
<div style="left:0px;top:640px;width:866px;height:1px;background:#8b7e53"></div>
<div style="left:0px;top:0px;width:866px;height:1px;background:#8b7e53"></div>
</div></body></html>
